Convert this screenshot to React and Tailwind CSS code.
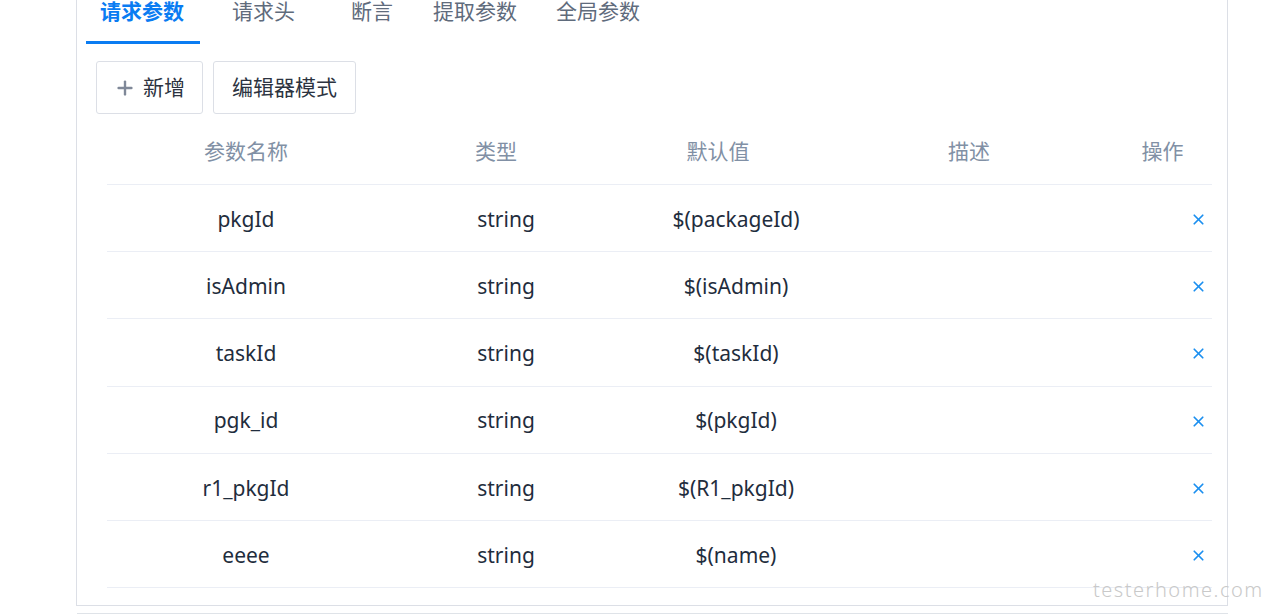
import { Plus, X } from 'lucide-react';

const TABS = [
  { label: '请求参数', cls: 'ml-0', active: true },
  { label: '请求头', cls: 'ml-[18px]' },
  { label: '断言', cls: 'ml-[28px]' },
  { label: '提取参数', cls: 'ml-[12px]' },
  { label: '全局参数', cls: 'ml-[11px]' },
];

const PARAMS = [
  { name: 'pkgId', type: 'string', value: '$(packageId)' },
  { name: 'isAdmin', type: 'string', value: '$(isAdmin)' },
  { name: 'taskId', type: 'string', value: '$(taskId)' },
  { name: 'pgk_id', type: 'string', value: '$(pkgId)' },
  { name: 'r1_pkgId', type: 'string', value: '$(R1_pkgId)' },
  { name: 'eeee', type: 'string', value: '$(name)' },
];

const font = { fontFamily: '"Noto Sans", "Noto Sans CJK SC", sans-serif' };

export default function App() {
  return (
    <div className="relative w-[1267px] h-[614px] overflow-hidden bg-white" style={font}>
      <div className="ml-[76px] w-[1152px] border-x border-b border-[#dcdfe6]">
        {/* tabs */}
        <div className="flex pl-[9px] h-[44px]">
          {TABS.map(t => (
            <div
              key={t.label}
              className={`${t.cls} h-[44px] flex flex-col justify-between text-[21px] leading-[23px]
                ${t.active ? 'pl-[14px] pr-[16px] text-[#0a7cf2] font-bold border-b-[3px] border-[#0a7cf2]' : 'px-[14px] text-[#5f6b7c]'}`}
            >
              <span>{t.label}</span>
            </div>
          ))}
        </div>

        {/* buttons */}
        <div className="flex gap-[10px] pl-[19px] mt-[17px]">
          <button className="h-[53px] pl-[17px] pr-[17px] flex items-center gap-[7px] border border-[#dcdfe6] rounded-[3px] text-[21px] text-[#2c3340]">
            <Plus size={22} strokeWidth={2.6} className="text-[#7f8898]" />
            新增
          </button>
          <button className="h-[53px] px-[18px] flex items-center border border-[#dcdfe6] rounded-[3px] text-[21px] text-[#2c3340]">
            编辑器模式
          </button>
        </div>

        {/* table */}
        <div className="ml-[30px] w-[1105px] mt-[6px] pb-[17px]">
          <div className="grid grid-cols-[278px_222px_222px_280px_1fr] h-[65px] items-center text-center text-[21px] text-[#8190a5] border-b border-[#ebeef5]">
            <div>参数名称</div>
            <div>类型</div>
            <div>默认值</div>
            <div>描述</div>
            <div className="pl-[4px]">操作</div>
          </div>
          {PARAMS.map(p => (
            <div
              key={p.name}
              className="grid grid-cols-[278px_242px_218px_1fr_28px] h-[67.2px] pt-[3px] items-center text-center text-[21px] text-[#1f2d3d] border-b border-[#ebeef5]"
            >
              <div>{p.name}</div>
              <div>{p.type}</div>
              <div>{p.value}</div>
              <div />
              <div className="flex justify-center">
                <X size={17} strokeWidth={2.4} className="text-[#1b8ff0]" />
              </div>
            </div>
          ))}
        </div>
      </div>

      <div className="ml-[77px] w-[1151px] mt-[7px] border-t-2 border-[#dfe3e8]" />

      {/* watermark */}
      <div className="absolute left-[1093px] top-[575px] text-[20px] tracking-[1.5px] text-[#c9c9c9] font-light">
        testerhome.com
      </div>
    </div>
  );
}
